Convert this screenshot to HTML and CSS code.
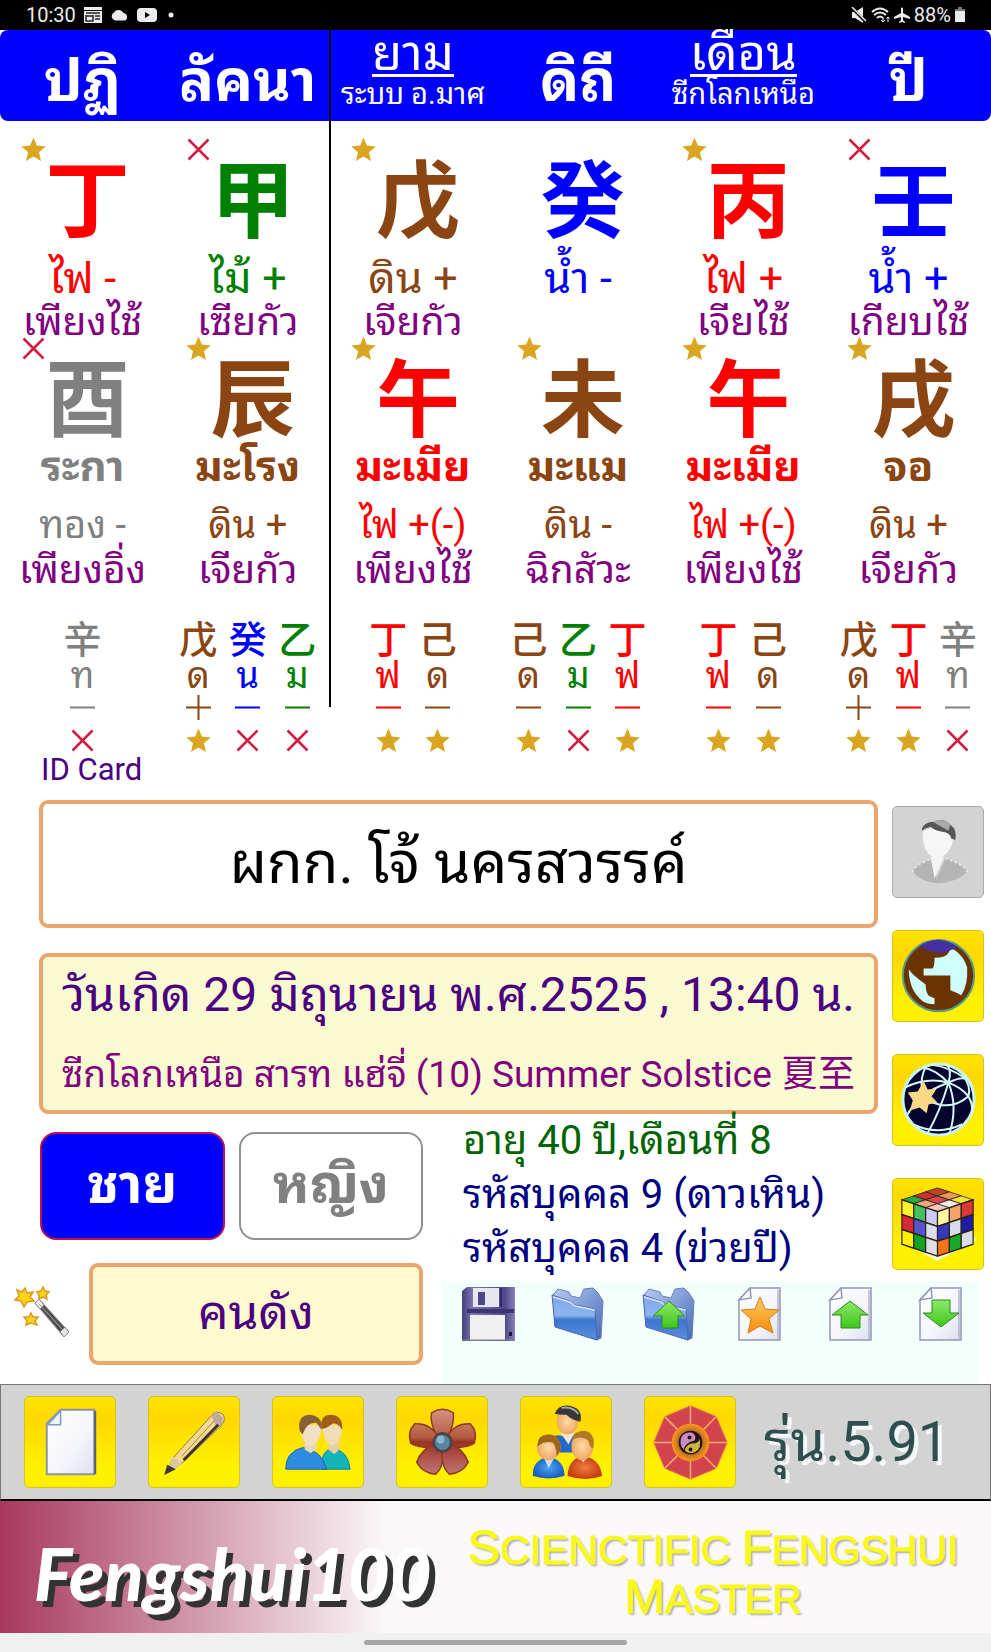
FILE: index.html
```html
<!DOCTYPE html>
<html lang="th">
<head>
<meta charset="utf-8">
<meta name="viewport" content="width=device-width, initial-scale=1">
<title>Fengshui100</title>
<link rel="stylesheet" href="styles.css">
</head>
<body>
<svg class="defs" aria-hidden="true">
  <defs>
    <symbol id="star" viewBox="0 0 25 25"><path d="M12.500 0.500L15.800 8.500L24.700 9.500L18 15.300L20 24L12.500 19.500L5 24L7 15.300L0.300 9.500L9.200 8.500Z" fill="#daa520"/></symbol>
    <symbol id="cross" viewBox="0 0 25 25"><path d="M2.500 2.500L22.500 22.500M22.500 2.500L2.500 22.500" stroke="#d01c42" stroke-width="2.500" fill="none"/></symbol>
    <symbol id="minus" viewBox="0 0 25 25"><path d="M0 12.500H25" stroke="currentColor" stroke-width="2"/></symbol>
    <symbol id="plus" viewBox="0 0 25 25"><path d="M0 12.500H25M12.500 0V25" stroke="currentColor" stroke-width="2"/></symbol>
    <linearGradient id="folderBack" x1="0" y1="0" x2="1" y2="1"><stop offset="0" stop-color="#b8cdf2"/><stop offset="1" stop-color="#4468b8"/></linearGradient>
    <linearGradient id="folderFront" x1="0" y1="0" x2="0" y2="1"><stop offset="0" stop-color="#7ea6ea"/><stop offset=".45" stop-color="#8db6ee"/><stop offset=".55" stop-color="#3c74cf"/><stop offset="1" stop-color="#5c8fe0"/></linearGradient>
    <linearGradient id="paper" x1="0" y1="0" x2="1" y2="1"><stop offset="0" stop-color="#fff"/><stop offset=".6" stop-color="#f4f5fb"/><stop offset="1" stop-color="#dcdfee"/></linearGradient>
    <linearGradient id="green" x1="0" y1="0" x2="0" y2="1"><stop offset="0" stop-color="#8be86a"/><stop offset="1" stop-color="#3fc61c"/></linearGradient>
    <linearGradient id="orange" x1="0" y1="0" x2="0" y2="1"><stop offset="0" stop-color="#ffcf5a"/><stop offset="1" stop-color="#f58a12"/></linearGradient>
    <linearGradient id="disk" x1="0" y1="0" x2="1" y2="0"><stop offset="0" stop-color="#45407c"/><stop offset=".2" stop-color="#7b75b4"/><stop offset=".8" stop-color="#4e478c"/><stop offset="1" stop-color="#8681b8"/></linearGradient>
    <linearGradient id="petal" x1="0" y1="0" x2="0" y2="91" gradientUnits="userSpaceOnUse"><stop offset=".12" stop-color="#d9958a"/><stop offset=".45" stop-color="#b35a3c"/><stop offset=".5" stop-color="#9c3122"/><stop offset=".85" stop-color="#c07474"/></linearGradient>
    <radialGradient id="blueShirt"><stop offset="0" stop-color="#4fa3ee"/><stop offset="1" stop-color="#1560c4"/></radialGradient>
    <radialGradient id="redShirt"><stop offset="0" stop-color="#f08040"/><stop offset="1" stop-color="#c63a10"/></radialGradient>
    <radialGradient id="skin"><stop offset="0" stop-color="#ffd9a8"/><stop offset="1" stop-color="#f0a860"/></radialGradient>
    <radialGradient id="glow"><stop offset=".5" stop-color="#a06030"/><stop offset="1" stop-color="#ff9a14"/></radialGradient>
    <symbol id="folder" viewBox="0 0 54 54">
      <path d="M2 8L7 2L18 5L20 9L29 11L33 2L42 1L47 6L52 14L50 51L46 53L4 39Z" fill="url(#folderBack)" stroke="#6a7fb8"/>
      <path d="M1 8L19 14L24 18L44 22L46 53L4 40Z" fill="url(#folderFront)" stroke="#4c68b0"/>
      <path d="M2 10L19 15L24 19L44 23" fill="none" stroke="#d5e3fa" stroke-width="1.500"/>
    </symbol>
    <symbol id="sheet" viewBox="0 0 54 54">
      <path d="M18 1H48V53H7V13Z" fill="url(#paper)" stroke="#9196b4" stroke-width="1.500"/>
      <path d="M18 1L19 11L7 13Z" fill="#fff" stroke="#9196b4" stroke-width="1.500"/>
      <path d="M46 3V52" stroke="#b4b8d0" stroke-width="1.500"/>
    </symbol>
  </defs>
</svg>

<header class="status">
  <span class="status-side">
    <span>10:30</span>
    <svg width="18" height="16" viewBox="0 0 18 16"><path d="M0 0H18V3H0ZM0 4H18V16H0Z" fill="#ececec"/><path d="M2 6H16M2 9H9M11 9H16M11 12H16M2 8V14H9V8" stroke="#222" stroke-width="1.500" fill="none"/></svg>
    <svg width="19" height="12" viewBox="0 0 19 12"><path d="M5 11.500A4.300 4.300 0 0 1 4 3.500A5.500 5.500 0 0 1 13.500 4A4 4 0 0 1 15 11.500Z" fill="#ececec"/></svg>
    <svg width="20" height="14" viewBox="0 0 20 14"><rect width="20" height="14" rx="4" fill="#ececec"/><path d="M8 4L13 7L8 10Z" fill="#000"/></svg>
    <svg width="12" height="6" viewBox="0 0 12 6"><circle cx="6" cy="3" r="2.500" fill="#ececec"/></svg>
  </span>
  <span class="status-side status-right">
    <svg width="16" height="16" viewBox="0 0 16 16"><path d="M1 5H4L12 0V16L4 11H1Z" fill="#ececec"/><path d="M0 0L15 15" stroke="#000" stroke-width="3"/><path d="M1 0L15 14" stroke="#ececec" stroke-width="1.500"/></svg>
    <svg width="19" height="16" viewBox="0 0 19 16"><path d="M1 5Q9 -2 17 5M3 8Q9 3 15 8M6 11Q9 8 12 11" stroke="#ececec" stroke-width="2" fill="none"/><path d="M12 15V10M10 13L12 15L14 13M17 10V15M15.500 11.500L17 10L18.500 11.500" stroke="#ececec" fill="none"/></svg>
    <svg width="16" height="16" viewBox="0 0 16 16"><path d="M7 1Q8 0 9 1V6L16 10V12L9 10V13L11 15V16L8 15L5 16V15L7 13V10L0 12V10L7 6Z" fill="#ececec"/></svg>
    <span>88%</span>
    <svg width="10" height="16" viewBox="0 0 10 16"><path d="M3 0H7V2H10V5H0V2H3Z" fill="#777"/><path d="M0 4H10V15H0Z" fill="#ececec"/></svg>
  </span>
</header>

<main>
  <section class="chart">
    <div class="heads">
      <h2 class="head">ปฏิ</h2>
      <h2 class="head">ลัคนา</h2>
      <div class="head-link"><a href="#hour">ยาม</a><span>ระบบ อ.มาศ</span></div>
      <h2 class="head">ดิถี</h2>
      <div class="head-link"><a href="#month">เดือน</a><span>ซีกโลกเหนือ</span></div>
      <h2 class="head">ปี</h2>
    </div>
    <div class="pillars">
      <article class="pillar">
        <div class="glyph fire"><svg class="mark"><use href="#star"/></svg>丁</div>
        <p class="element fire">ไฟ -</p><p class="god">เพียงไช้</p>
        <div class="glyph metal"><svg class="mark"><use href="#cross"/></svg>酉</div>
        <p class="animal metal">ระกา</p><p class="element metal">ทอง -</p><p class="god">เพียงอิ่ง</p>
        <div class="hidden-stems">
          <div class="stem metal"><b>辛</b><span>ท</span><svg><use href="#minus"/></svg><svg><use href="#cross"/></svg></div>
        </div>
      </article>
      <article class="pillar">
        <div class="glyph wood"><svg class="mark"><use href="#cross"/></svg>甲</div>
        <p class="element wood">ไม้ +</p><p class="god">เซียกัว</p>
        <div class="glyph earth"><svg class="mark"><use href="#star"/></svg>辰</div>
        <p class="animal earth">มะโรง</p><p class="element earth">ดิน +</p><p class="god">เจียกัว</p>
        <div class="hidden-stems">
          <div class="stem earth"><b>戊</b><span>ด</span><svg><use href="#plus"/></svg><svg><use href="#star"/></svg></div>
          <div class="stem water"><b>癸</b><span>น</span><svg><use href="#minus"/></svg><svg><use href="#cross"/></svg></div>
          <div class="stem wood"><b>乙</b><span>ม</span><svg><use href="#minus"/></svg><svg><use href="#cross"/></svg></div>
        </div>
      </article>
      <article class="pillar">
        <div class="glyph earth"><svg class="mark"><use href="#star"/></svg>戊</div>
        <p class="element earth">ดิน +</p><p class="god">เจียกัว</p>
        <div class="glyph fire"><svg class="mark"><use href="#star"/></svg>午</div>
        <p class="animal fire">มะเมีย</p><p class="element fire">ไฟ +(-)</p><p class="god">เพียงไช้</p>
        <div class="hidden-stems">
          <div class="stem fire"><b>丁</b><span>ฟ</span><svg><use href="#minus"/></svg><svg><use href="#star"/></svg></div>
          <div class="stem earth"><b>己</b><span>ด</span><svg><use href="#minus"/></svg><svg><use href="#star"/></svg></div>
        </div>
      </article>
      <article class="pillar">
        <div class="glyph water">癸</div>
        <p class="element water">น้ำ -</p><p class="god"></p>
        <div class="glyph earth"><svg class="mark"><use href="#star"/></svg>未</div>
        <p class="animal earth">มะแม</p><p class="element earth">ดิน -</p><p class="god">ฉิกสัวะ</p>
        <div class="hidden-stems">
          <div class="stem earth"><b>己</b><span>ด</span><svg><use href="#minus"/></svg><svg><use href="#star"/></svg></div>
          <div class="stem wood"><b>乙</b><span>ม</span><svg><use href="#minus"/></svg><svg><use href="#cross"/></svg></div>
          <div class="stem fire"><b>丁</b><span>ฟ</span><svg><use href="#minus"/></svg><svg><use href="#star"/></svg></div>
        </div>
      </article>
      <article class="pillar">
        <div class="glyph fire"><svg class="mark"><use href="#star"/></svg>丙</div>
        <p class="element fire">ไฟ +</p><p class="god">เจียไช้</p>
        <div class="glyph fire"><svg class="mark"><use href="#star"/></svg>午</div>
        <p class="animal fire">มะเมีย</p><p class="element fire">ไฟ +(-)</p><p class="god">เพียงไช้</p>
        <div class="hidden-stems">
          <div class="stem fire"><b>丁</b><span>ฟ</span><svg><use href="#minus"/></svg><svg><use href="#star"/></svg></div>
          <div class="stem earth"><b>己</b><span>ด</span><svg><use href="#minus"/></svg><svg><use href="#star"/></svg></div>
        </div>
      </article>
      <article class="pillar">
        <div class="glyph water"><svg class="mark"><use href="#cross"/></svg>壬</div>
        <p class="element water">น้ำ +</p><p class="god">เกียบไช้</p>
        <div class="glyph earth"><svg class="mark"><use href="#star"/></svg>戌</div>
        <p class="animal earth">จอ</p><p class="element earth">ดิน +</p><p class="god">เจียกัว</p>
        <div class="hidden-stems">
          <div class="stem earth"><b>戊</b><span>ด</span><svg><use href="#plus"/></svg><svg><use href="#star"/></svg></div>
          <div class="stem fire"><b>丁</b><span>ฟ</span><svg><use href="#minus"/></svg><svg><use href="#star"/></svg></div>
          <div class="stem metal"><b>辛</b><span>ท</span><svg><use href="#minus"/></svg><svg><use href="#cross"/></svg></div>
        </div>
      </article>
    </div>
    <div class="divider"></div>
  </section>

  <label class="id-label" for="name">ID Card</label>

  <section class="profile">
    <input class="name" id="name" type="text" value="ผกก. โจ้ นครสวรรค์">
    <button class="birth" type="button">
      <span class="birth-date">วันเกิด 29 มิถุนายน พ.ศ.2525 , 13:40 น.</span>
      <span class="birth-season">ซีกโลกเหนือ สารท แฮ่จี่ (10) Summer Solstice 夏至</span>
    </button>

    <div class="side">
      <button class="tile tile-off" type="button" aria-label="Person">
        <svg viewBox="0 0 91 91"><path d="M20 66Q22 58 38 53L44 72L53 52Q72 58 75 66Q62 77 46 77Q30 77 20 66Z" fill="#b4b4b4"/><path d="M20 66Q22 58 38 53M53 52Q72 58 75 66" fill="none" stroke="#e8e8e8" stroke-width="2" stroke-dasharray="2 3"/><path d="M38 50L42 72L52 50Z" fill="#f4f4f4"/><path d="M30 25Q30 46 40 50Q46 54 53 48Q62 40 61 25Q46 16 30 25Z" fill="#f6f6f6"/><path d="M29 24Q30 15 42 15Q50 10 58 18Q65 23 63 33L59 32Q58 26 50 25Q42 24 38 20Q33 21 29 24Z" fill="#555"/><path d="M40 15Q50 10 58 18L56 24Z" fill="#aaa"/></svg>
      </button>
      <button class="tile" type="button" aria-label="Earth">
        <svg viewBox="0 0 91 91"><circle cx="46" cy="45" r="36" fill="#6b3300" stroke="#4f9c8c" stroke-width="2"/><path d="M27 15Q46 2 65 16Q56 23 45 22Q34 21 27 15Z" fill="#4430a0"/><path d="M31 38H40Q42 36 42 27Q54 27 56 22Q58 18 62 19Q72 26 75 37Q76 55 69 65Q66 63 58 60V45H31Z" fill="#cffffa"/><path d="M16 39Q20 45 33 54Q33 63 37 66L42 68V74Q35 74 30 71Q16 60 16 39Z" fill="#cffffa"/></svg>
      </button>
      <button class="tile" type="button" aria-label="Sky">
        <svg viewBox="0 0 91 91"><circle cx="46" cy="45" r="36" fill="#04042e" stroke="#c8f4f4" stroke-width="3"/><g fill="none" stroke="#d4f8f8" stroke-width="2"><path d="M56 28Q42 14 30 13M56 28Q60 16 54 9M56 28Q68 22 74 24M56 28Q82 38 80 58M56 28Q66 52 57 80M56 28Q48 56 35 79M56 28Q26 38 13 63M12 33Q34 22 56 28M33 12Q22 36 40 48Q60 56 76 42Q80 32 70 20M20 70Q46 82 70 70M40 10Q56 12 74 24"/></g><path d="M31 26L35 35L44 34L39 42L45 48L36 50L34 59L27 53L17 56L20 46L15 38L25 37Z" fill="#fbd788"/></svg>
      </button>
      <button class="tile" type="button" aria-label="Cube">
        <svg viewBox="0 0 91 91"><path d="M7 63L45 83L84 62L81 58L45 76L9 58Z" fill="#fffbd0"/>
          <g stroke="#2a2218" stroke-width=".1">
            <g transform="matrix(12 -4 12 4 9 21)"><path d="M0 0h1v1h-1z" fill="#2faa38"/><path d="M1 0h1v1h-1z" fill="#d03030"/><path d="M2 0h1v1h-1z" fill="#c04428"/><path d="M0 1h1v1h-1z" fill="#f0a878"/><path d="M1 1h1v1h-1z" fill="#d84850"/><path d="M2 1h1v1h-1z" fill="#ee9858"/><path d="M0 2h1v1h-1z" fill="#f8c8c0"/><path d="M1 2h1v1h-1z" fill="#f4e8e8"/><path d="M2 2h1v1h-1z" fill="#f4e440"/></g>
            <g transform="matrix(12 4 0 15 9 21)"><path d="M0 0h1v1h-1z" fill="#fff22a"/><path d="M1 0h1v1h-1z" fill="#45c060"/><path d="M2 0h1v1h-1z" fill="#ccccfa"/><path d="M0 1h1v1h-1z" fill="#d82838"/><path d="M1 1h1v1h-1z" fill="#5454cc"/><path d="M2 1h1v1h-1z" fill="#dcdcea"/><path d="M0 2h1v1h-1z" fill="#fff000"/><path d="M1 2h1v1h-1z" fill="#14a420"/><path d="M2 2h1v1h-1z" fill="#dedee4"/></g>
            <g transform="matrix(12 -4 0 15 45 33)"><path d="M0 0h1v1h-1z" fill="#fff8a0"/><path d="M1 0h1v1h-1z" fill="#f4a468"/><path d="M2 0h1v1h-1z" fill="#d83838"/><path d="M0 1h1v1h-1z" fill="#3838bc"/><path d="M1 1h1v1h-1z" fill="#dcdce8"/><path d="M2 1h1v1h-1z" fill="#1c1ca8"/><path d="M0 2h1v1h-1z" fill="#f47414"/><path d="M1 2h1v1h-1z" fill="#18a828"/><path d="M2 2h1v1h-1z" fill="#dcdce8"/></g>
          </g></svg>
      </button>
    </div>

    <div class="left">
      <div class="genders">
        <button class="gender gender-on" type="button" aria-pressed="true">ชาย</button>
        <button class="gender" type="button" aria-pressed="false">หญิง</button>
      </div>
      <div class="tag-row">
        <button class="icon wand" type="button" aria-label="Magic wand">
          <svg width="58" height="54" viewBox="0 0 58 54"><path d="M22 17L26 13L56 46L51 51Z" fill="#505050" stroke="#999"/><path d="M22 17L26 13L31 19L27 23Z" fill="#eee" stroke="#888"/><path d="M47 46L52 41L56 46L51 51Z" fill="#e4e4e4" stroke="#888"/><path d="M26 18L49 43" stroke="#aaa"/><g fill="#ffd21c" stroke="#d99a1c" stroke-width="1.500"><path d="M12 2L14 7L20 6L17 11L21 15L14 16L11 21L8 15L2 14L6 10L4 4L9 6Z"/><path d="M30 1L32 5L36 6L33 9L34 13L30 11L26 13L26 9L24 6L28 5Z"/><path d="M18 27L20 31L25 31L22 35L24 39L18 37L13 39L14 35L11 31L16 31Z"/></g></svg>
        </button>
        <input class="tag" type="text" aria-label="คนดัง" value="คนดัง">
      </div>
    </div>

    <div class="info">
      <p class="age">อายุ 40 ปี,เดือนที่ 8</p>
      <p>รหัสบุคคล 9 (ดาวเหิน)</p>
      <p>รหัสบุคคล 4 (ข่วยปี)</p>
    </div>

    <div class="files">
      <button class="icon" type="button" aria-label="Save"><svg viewBox="0 0 54 54"><path d="M1 4L6 0H54V54H1Z" fill="url(#disk)"/><path d="M12 1H38V20H12Z" fill="#e6e6ec"/><path d="M17 5H24V18H17Z" fill="#4c4786"/><path d="M40 1V20" stroke="#2f2a66" stroke-width="2"/><path d="M6 22H53V26H6Z" fill="#3b3570"/><path d="M9 28H44V53H9Z" fill="#f0f0f0"/><path d="M1 53H54" stroke="#888"/><path d="M48 45H51V49H48Z" fill="#1c1844"/></svg></button>
      <button class="icon" type="button" aria-label="Open folder"><svg viewBox="0 0 54 54"><use href="#folder"/></svg></button>
      <button class="icon" type="button" aria-label="Folder up"><svg viewBox="0 0 54 54"><use href="#folder"/><path d="M27 14L43 29H36V41H20V29H11Z" fill="url(#green)" stroke="#2d8a1a"/></svg></button>
      <button class="icon" type="button" aria-label="Favourite"><svg viewBox="0 0 54 54"><use href="#sheet"/><path d="M28 10L33 22L47 23L37 32L41 46L28 39L16 46L19 32L9 23L23 22Z" fill="url(#orange)" stroke="#d87c14"/></svg></button>
      <button class="icon" type="button" aria-label="Upload"><svg viewBox="0 0 54 54"><use href="#sheet"/><path d="M27 14L45 28H37V41H18V28H9Z" fill="url(#green)" stroke="#2d8a1a"/></svg></button>
      <button class="icon" type="button" aria-label="Download"><svg viewBox="0 0 54 54"><use href="#sheet"/><path d="M28 40L46 26H37V13H19V26H10Z" fill="url(#green)" stroke="#2d8a1a"/></svg></button>
    </div>
  </section>

  <nav class="toolbar">
    <button class="tile" type="button" aria-label="New"><svg viewBox="0 0 91 91"><path d="M36 13H70V78H22V27Z" fill="url(#paper)" stroke="#8a94a4" stroke-width="2"/><path d="M71 14V78" stroke="#556070" stroke-width="2"/><path d="M36 14V28H23Z" fill="#eef4fc" stroke="#7c9cc8" stroke-width="1.500"/></svg></button>
    <button class="tile" type="button" aria-label="Edit"><svg viewBox="0 0 91 91"><path d="M17 77L24 62L63 19Q68 13 74 17Q79 22 73 29L32 68Z" fill="#f4d890" stroke="#8c7c50"/><path d="M63 19L68 15L75 21L73 29L68 30Z" fill="#c0a8a0"/><path d="M33 60L66 24" stroke="#9c8450"/><path d="M35 64L70 28" stroke="#3c3428" stroke-width="3"/><path d="M17 77L24 60L34 68Z" fill="#d8c8a0"/><path d="M17 77L19 70L25 73Z" fill="#3c3838" stroke="#3c3838" stroke-width="2"/></svg></button>
    <button class="tile" type="button" aria-label="Couple"><svg viewBox="0 0 91 91"><path d="M50 73Q47 55 60 52Q76 54 78 73Z" fill="#12b4b8" stroke="#0d7fa8"/><path d="M56 53L62 58L67 53V44H56Z" fill="#e8d0a8"/><path d="M50 28Q50 46 60 49Q70 46 70 28Z" fill="#f2dcb8"/><path d="M49 32Q47 18 59 18Q71 19 70 33Q64 25 60 27Q54 32 49 32Z" fill="#a05c18"/><path d="M13 73Q12 56 30 51Q50 54 54 73Z" fill="#2c8ce0" stroke="#1b64b4"/><path d="M32 53L38 57L44 52V44H32Z" fill="#e8d8bc"/><path d="M27 28Q28 46 38 50Q49 46 49 28Z" fill="#f2e0c4"/><path d="M27 34Q24 18 38 18Q51 20 49 33L44 26Q34 25 30 38Z" fill="#886038"/></svg></button>
    <button class="tile" type="button" aria-label="Flower"><svg viewBox="0 0 91 91"><g fill="url(#petal)" stroke="#8c3a20" stroke-width="1.500"><path d="M40 40Q33 25 35 16Q46 9 57 16Q58 27 52 40Z"/><path d="M42 50Q24 53 14 47Q10 35 18 27Q33 26 42 40Z"/><path d="M50 50Q68 53 78 47Q82 35 74 27Q59 26 50 40Z"/><path d="M46 48Q49 70 39 78Q26 77 20 66Q24 53 40 46Z"/><path d="M46 48Q43 70 53 78Q66 77 72 66Q68 53 52 46Z"/></g><circle cx="46" cy="46" r="9" fill="#5888a0" stroke="#4c4448" stroke-width="3"/><circle cx="44" cy="43" r="4" fill="#8cb8cc"/></svg></button>
    <button class="tile" type="button" aria-label="Family"><svg viewBox="0 0 91 91"><path d="M33 40Q40 36 48 44L56 36Q63 40 60 56H38Q32 50 33 40Z" fill="#2468c8"/><path d="M40 36L48 48L54 36Z" fill="#f4e4d4"/><ellipse cx="47" cy="25" rx="11" ry="13" fill="url(#skin)"/><path d="M34 17Q38 7 50 9Q63 12 60 25Q52 24 46 18Q38 18 34 17Z" fill="#383838"/><path d="M41 11Q52 9 58 17" stroke="#aaa" stroke-width="2" fill="none"/><path d="M12 80Q11 64 28 60Q44 64 44 80Q28 85 12 80Z" fill="url(#blueShirt)"/><path d="M23 61L28 72L34 61Z" fill="#c8e0f4"/><ellipse cx="28" cy="51" rx="12" ry="13" fill="url(#skin)"/><path d="M17 50Q16 38 28 38Q41 38 40 54L36 60Q36 50 32 46Q24 44 17 50Z" fill="#a0661c"/><path d="M47 80Q48 62 63 60Q80 62 82 80Q66 86 47 80Z" fill="url(#redShirt)"/><path d="M57 60L63 66L68 60Z" fill="#ffe0c0"/><ellipse cx="62" cy="50" rx="11" ry="14" fill="url(#skin)"/><path d="M51 44Q54 34 64 34Q76 36 73 52Q70 52 68 44Q60 38 51 44Z" fill="#b07828"/></svg></button>
    <button class="tile" type="button" aria-label="Bagua"><svg viewBox="0 0 91 91"><path d="M46 9L72 20L83 46L72 72L46 83L20 72L9 46L20 20Z" fill="#d2434e" stroke="#e06058"/><path d="M46 9V83M9 46H83M20 20L72 72M72 20L20 72" stroke="#ffb070" stroke-width="1.500"/><circle cx="46" cy="46" r="19" fill="url(#glow)"/><circle cx="46" cy="46" r="12" fill="#28101c"/><path d="M37 40Q41 35 47 36Q53 39 50 44Q41 46 39 53Q34 48 37 40Z" fill="#c890c0"/><path d="M55 42Q58 53 50 56Q42 58 40 53Q44 46 50 47Q55 46 55 42Z" fill="#c8b838"/><circle cx="45" cy="41" r="2" fill="#28101c"/><circle cx="46" cy="53" r="2" fill="#28101c"/></svg></button>
    <span class="version">รุ่น.5.91</span>
  </nav>

  <div class="banner">
    <strong class="logo">Fengshui100</strong>
    <p class="slogan"><span>Scienctific</span> <span>Fengshui</span> <span>Master</span></p>
  </div>
</main>
<footer class="gesture"><div class="pill"></div></footer>
</body>
</html>
```
FILE: styles.css
```css
* { box-sizing: border-box; }

body {
  margin: 0;
  background: #fff;
  font-family: Roboto, "Noto Sans Thai Looped", "Droid Sans Thai", Loma, Garuda, Waree, "Noto Sans Thai", "Noto Sans", "Noto Sans CJK TC", sans-serif;
}

h2, p { margin: 0; }
button, input { font-family: inherit; }
button { padding: 0; cursor: pointer; }
.defs { position: absolute; width: 0; height: 0; }

.status {
  display: flex;
  justify-content: space-between;
  align-items: center;
  height: 30px;
  padding: 0 26px;
  background: #000;
  color: #ececec;
  font-size: 20px;
}
.status-side { display: flex; align-items: center; gap: 8px; }
.status-right { gap: 4px; }

.chart { position: relative; }
.heads, .pillars { display: grid; grid-template-columns: repeat(6, minmax(0, 1fr)); }
.heads {
  height: 91px;
  background: #00f;
  border-radius: 8px;
  color: #fff;
  text-align: center;
}
.head { font-size: 58px; line-height: 102px; white-space: nowrap; }
.head-link { display: flex; flex-direction: column; align-items: center; white-space: nowrap; }
.head-link a {
  height: 47px;
  border-bottom: 3px solid #fff;
  color: #fff;
  font-size: 49px;
  line-height: 48px;
  text-decoration: none;
}
.head-link span { font-size: 29px; line-height: 34px; }
.divider {
  position: absolute;
  top: 0;
  bottom: 46px;
  left: 33.2%;
  width: 2px;
  background: #000;
}

.pillar { display: flex; flex-direction: column; text-align: center; white-space: nowrap; }
.glyph {
  position: relative;
  height: 92px;
  margin-top: 32px;
  padding-left: 10px;
  font-family: "Noto Sans CJK TC", sans-serif;
  font-size: 84px;
  font-weight: 700;
  line-height: 84px;
}
.god + .glyph { margin-top: 8px; }
.mark { position: absolute; top: -16px; left: 21px; width: 25px; height: 25px; }
.element { font-size: 38px; line-height: 46px; }
.glyph + .element { margin-top: 11px; font-size: 43px; line-height: 44px; }
.god { height: 44px; color: #800080; font-size: 39px; line-height: 44px; }
.animal { margin-bottom: 12px; font-size: 42px; font-weight: 700; line-height: 46px; }

.fire { color: #f00; }
.wood { color: #008000; }
.earth { color: #8b4513; }
.water { color: #00f; }
.metal { color: #808080; }

.hidden-stems { display: flex; justify-content: center; margin-top: 24px; }
.stem { display: flex; flex-direction: column; align-items: center; width: 30%; }
.stem b { font-family: "Noto Sans CJK TC", sans-serif; font-size: 38px; font-weight: 500; line-height: 42px; }
.stem span { font-size: 36px; line-height: 37px; }
.stem svg { width: 25px; height: 25px; }
.stem svg + svg { margin-top: 8px; }

.id-label { display: block; padding-left: 41px; color: #4b0082; font-size: 31px; line-height: 34px; }

.profile {
  display: grid;
  grid-template-columns: minmax(0, 441fr) minmax(0, 437fr) minmax(113px, 113fr);
  grid-template-areas:
    "name name side"
    "birth birth side"
    "left info side"
    "left files files";
  margin-top: 13px;
}
.name, .birth, .tag { border: 4px solid #e9a66e; border-radius: 9px; text-align: center; }
.name {
  grid-area: name;
  min-width: 0;
  height: 128px;
  margin: 0 0 25px 39px;
  padding: 0 0 16px;
  background: #fff;
  color: #000;
  font-size: 58px;
}
.birth {
  grid-area: birth;
  display: flex;
  flex-direction: column;
  align-items: center;
  justify-content: space-between;
  height: 161px;
  margin-left: 39px;
  padding: 8px 0;
  background: #fafad2;
  white-space: nowrap;
}
.birth-date { color: #4b0082; font-size: 48px; line-height: 60px; }
.birth-season { color: #800080; font-size: 37px; line-height: 54px; }

.side { grid-area: side; display: flex; flex-direction: column; gap: 32px; padding: 6px 8px 0 14px; }
.tile {
  width: 92px;
  height: 92px;
  border: 1px solid #d8c020;
  border-radius: 5px;
  background: linear-gradient(#ffe400, #ffd800 25%, #fff200 80%, #ffee00);
}
.tile-off { border-color: #aaa; background: #d3d3d3; }
.tile svg { display: block; width: 100%; height: 100%; }

.left { grid-area: left; padding: 18px 18px 0 0; }
.genders { display: flex; gap: 14px; padding-left: 40px; }
.gender {
  flex: 1 1 0;
  height: 108px;
  padding-bottom: 16px;
  border: 2px solid #909090;
  border-radius: 16px;
  background: #fff;
  color: #808080;
  font-size: 54px;
  font-weight: 700;
}
.gender-on { border-color: #c01050; background: #00f; color: #fff; }
.tag-row { display: flex; align-items: center; gap: 18px; margin-top: 23px; padding-left: 13px; }
.icon { border: 0; background: none; }
.tag { flex: 1; min-width: 0; height: 102px; padding: 0 0 14px; background: #fffacd; color: #4b0082; font-size: 48px; }

.info { grid-area: info; padding-left: 22px; color: #000080; font-size: 40px; line-height: 54px; white-space: nowrap; }
.info .age { color: #006400; }
.files {
  grid-area: files;
  display: flex;
  justify-content: space-between;
  align-items: flex-start;
  height: 103px;
  margin: 5px 12px 0 0;
  padding: 6px 12px 0 20px;
  background: #f3fffa;
}
.files svg { display: block; width: 54px; height: 54px; }

.toolbar {
  display: flex;
  align-items: center;
  gap: 32px;
  height: 117px;
  padding: 0 23px;
  border: 1px solid #777;
  border-bottom: 2px solid #000;
  background: #d3d3d3;
}
.toolbar .tile { flex: none; }
.version { margin-left: -4px; color: #2f4f4f; font-size: 56px; line-height: 64px; text-shadow: 4px 4px 0 #f4f8f8; white-space: nowrap; }

.banner {
  display: flex;
  align-items: center;
  justify-content: space-between;
  height: 132px;
  padding: 12px 28px 0 34px;
  background: linear-gradient(90deg, #a8385e, #fbf8f9 39%);
}
.logo {
  color: #fff;
  font-family: Lato, sans-serif;
  font-size: 72px;
  font-style: italic;
  font-weight: 900;
  text-shadow: 6px 6px 0 #333;
}
.slogan {
  width: 500px;
  color: #f8f81c;
  font-family: "Liberation Sans", sans-serif;
  font-size: 41px;
  line-height: 46px;
  text-align: center;
  text-shadow: 2px 2px 2px #aaa;
  text-transform: uppercase;
  -webkit-text-stroke: 1px #f8f81c;
}
.slogan span { display: inline-block; }
.slogan span::first-letter { font-size: 49px; }

.gesture { display: flex; justify-content: center; align-items: center; height: 19px; background: #f0f0f0; }
.pill { width: 26.5%; height: 5px; border-radius: 3px; background: #a4a4a4; }
```
